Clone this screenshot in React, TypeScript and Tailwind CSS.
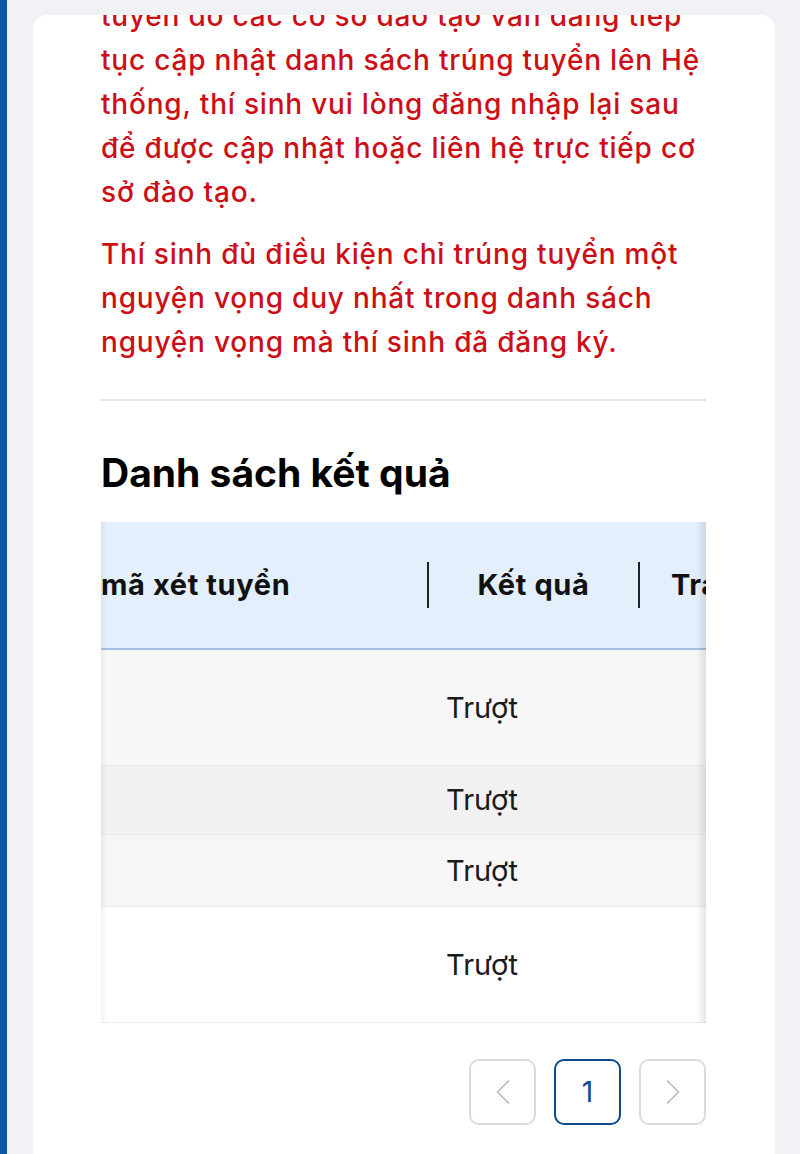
import { ChevronLeft, ChevronRight } from "lucide-react";

const rows = [
  { h: "h-[116px]", bg: "bg-[#f7f7f7]" },
  { h: "h-[69px]", bg: "bg-[#f1f1f1]" },
  { h: "h-[72px]", bg: "bg-[#f6f6f6]" },
  { h: "h-[116px]", bg: "bg-white" },
];

const notice1 = [
  "tuyển do các cơ sở đào tạo vẫn đang tiếp",
  "tục cập nhật danh sách trúng tuyển lên Hệ",
  "thống, thí sinh vui lòng đăng nhập lại sau",
  "để được cập nhật hoặc liên hệ trực tiếp cơ",
  "sở đào tạo.",
];

const notice2 = [
  "Thí sinh đủ điều kiện chỉ trúng tuyển một",
  "nguyện vọng duy nhất trong danh sách",
  "nguyện vọng mà thí sinh đã đăng ký.",
];

export default function App() {
  return (
    <div
      className="relative h-[1154px] w-[800px] overflow-hidden bg-[#f1f2f6]"
      style={{ fontFamily: "Inter, 'Noto Sans', sans-serif" }}
    >
      <div className="absolute left-0 top-0 h-full w-[7px] bg-[#0c58a4]" />
      {/* card is scrolled: first line is clipped by its top edge */}
      <div className="ml-[33px] mr-[25px] mt-[15px] h-[1200px] overflow-hidden rounded-t-[14px] bg-white pl-[68px] pr-[69px]">
        <div className="-mt-[21px] text-[28px] font-medium leading-[44px] tracking-[0.8px] text-[#cc0f16]">
          <p>
            {notice1.map((l) => (
              <span key={l} className="block whitespace-nowrap">
                {l}
              </span>
            ))}
          </p>
          <p className="mt-[18px]">
            {notice2.map((l) => (
              <span key={l} className="block whitespace-nowrap">
                {l}
              </span>
            ))}
          </p>
        </div>

        <div className="mt-[35px] h-[2px] bg-[#e6e6e6]" />

        <h2 className="mt-[50px] text-[39px] font-bold leading-[44px] text-black">Danh sách kết quả</h2>

        <div className="relative mt-[27px] overflow-hidden">
          <div className="flex h-[128px] items-center border-b-2 border-[#a8c0df] bg-[#e3effc] text-[29px] font-bold tracking-[0.6px] text-[#111]">
            <div className="w-[326px] shrink-0 whitespace-nowrap">mã xét tuyển</div>
            <div className="h-[46px] w-[2px] shrink-0 bg-[#222]" />
            <div className="w-[209px] shrink-0 text-center whitespace-nowrap">Kết quả</div>
            <div className="h-[46px] w-[2px] shrink-0 bg-[#222]" />
            <div className="pl-[31px] whitespace-nowrap">Trạng thái</div>
          </div>
          {rows.map((r, i) => (
            <div
              key={i}
              className={`flex ${r.h} ${r.bg} items-center border-b border-[#ececec] text-[29px] text-[#1a1a1a]`}
            >
              <div className="w-[328px] shrink-0" />
              <div className="w-[106px] shrink-0 text-center">Trượt</div>
            </div>
          ))}
          <div className="pointer-events-none absolute right-0 top-0 h-full w-[10px] bg-gradient-to-l from-black/10 to-transparent" />
          <div className="pointer-events-none absolute left-0 top-0 h-full w-[6px] bg-gradient-to-r from-black/5 to-transparent" />
        </div>

        <div className="mt-[36px] flex justify-end gap-[18px]">
          <button className="flex h-[66px] w-[67px] items-center justify-center rounded-[10px] border-2 border-[#dcdcdc] bg-white text-[#b9b9b9]">
            <ChevronLeft size={44} strokeWidth={0.9} />
          </button>
          <button className="flex h-[66px] w-[67px] items-center justify-center rounded-[10px] border-2 border-[#0c4a8e] bg-white text-[28px] text-[#0c4a8e]">
            1
          </button>
          <button className="flex h-[66px] w-[67px] items-center justify-center rounded-[10px] border-2 border-[#dcdcdc] bg-white text-[#b9b9b9]">
            <ChevronRight size={44} strokeWidth={0.9} />
          </button>
        </div>
      </div>
    </div>
  );
}
